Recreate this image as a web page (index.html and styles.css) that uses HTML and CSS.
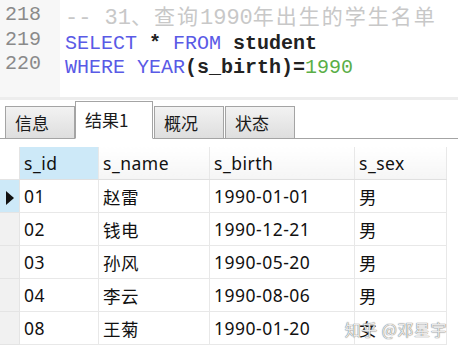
FILE: index.html
```html
<!DOCTYPE html>
<html>
    <head>
        <title>Query result</title>
        <link rel="stylesheet" href="styles.css">
    </head>
    <body>
        <div class="editor">
            <div class="gutter">
                <div>218</div>
                <div>219</div>
                <div>220</div>
            </div>
            <div class="code">
                <div class="comment">-- 31<span class="cjk">、查询</span>1990<span class="cjk">年出生的学生名单</span></div>
                <div><span class="kw">SELECT</span> <b>*</b> <span class="kw">FROM</span> <b>student</b></div>
                <div><span class="kw">WHERE</span> <span class="kw">YEAR</span><b>(s_birth)=</b><span class="num">1990</span></div>
            </div>
        </div>
        <div class="sep"></div>
        <div class="tabs">
            <div class="tab">信息</div>
            <div class="tab active">结果1</div>
            <div class="tab">概况</div>
            <div class="tab">状态</div>
        </div>
        <div class="grid">
            <table>
                <tr class="head">
                    <td class="ind"></td>
                    <td class="sel">s_id</td>
                    <td>s_name</td>
                    <td>s_birth</td>
                    <td>s_sex</td>
                </tr>
                <tr>
                    <td class="ind cur"><span class="arrow"></span></td>
                    <td>01</td><td>赵雷</td><td>1990-01-01</td><td>男</td>
                </tr>
                <tr>
                    <td class="ind"></td>
                    <td>02</td><td>钱电</td><td>1990-12-21</td><td>男</td>
                </tr>
                <tr>
                    <td class="ind"></td>
                    <td>03</td><td>孙风</td><td>1990-05-20</td><td>男</td>
                </tr>
                <tr>
                    <td class="ind"></td>
                    <td>04</td><td>李云</td><td>1990-08-06</td><td>男</td>
                </tr>
                <tr>
                    <td class="ind"></td>
                    <td>08</td><td>王菊</td><td>1990-01-20</td><td>女</td>
                </tr>
            </table>
            <div class="mark">知乎 @邓星宇</div>
        </div>
    </body>
</html>
```
FILE: styles.css
```css
body{
    margin: 0;
    width: 458px;
    height: 352px;
    overflow: hidden;
    background: #fff;
    font-family: "Noto Sans CJK SC", sans-serif;
}

.editor{
    display: flex;
    height: 97px;
    font-family: "Liberation Mono", monospace;
    font-size: 20px;
    line-height: 24.5px;
}

.gutter{
    width: 55px;
    padding: 3px 0 0 5px;
    background: #f7f7f7;
    color: #8a8a8a;
}

.code{
    flex: 1;
    padding: 3px 0 0 5px;
    white-space: nowrap;
}

.comment{
    color: #c8c8c8;
    font-size: 22px;
}

.cjk{
    font-family: "Noto Sans CJK SC", sans-serif;
    font-size: 21px;
    letter-spacing: 2px;
}

.kw{
    color: #5a5ae6;
}

.code b{
    color: #222;
}

.num{
    color: #5aae46;
}

.sep{
    height: 3px;
    background: #ededed;
}

.tabs{
    display: flex;
    align-items: flex-end;
    height: 38px;
    padding-left: 5px;
    border-bottom: 1px solid #a4a4a4;
}

.tab{
    height: 31px;
    line-height: 31px;
    padding: 0 0 0 9px;
    width: 59px;
    margin-bottom: -1px;
    border: 1px solid #a4a4a4;
    background: linear-gradient(#f2f2f2, #dedede);
    font-size: 17px;
    color: #1a1a1a;
}

.tab + .tab{
    margin-left: 1px;
}

.tab.active{
    height: 36px;
    line-height: 36px;
    width: 67px;
    margin-left: 0;
    background: #fff;
    border-bottom-color: #fff;
}

.grid{
    position: relative;
    padding-top: 8px;
}

table{
    border-collapse: collapse;
    width: 447px;
    font-family: "Noto Sans", "Noto Sans CJK SC", sans-serif;
    font-size: 17.5px;
    letter-spacing: 0.5px;
    color: #111;
    table-layout: fixed;
}

td{
    height: 32px;
    padding: 0 0 0 4px;
    border: 1px solid #e8e8e8;
    border-top: none;
    white-space: nowrap;
}

td:nth-child(2){ width: 74px; }
td:nth-child(3){ width: 106px; }
td:nth-child(4){ width: 140px; }

.head td{
    background: linear-gradient(#fff, #f5f5f5);
    border-bottom: 1px solid #e0e0e0;
}

.head td.sel{
    background: #cde9f8;
}

td.ind{
    width: 19px;
    padding: 0;
    background: #f1f1f1;
    border-left: none;
    border-color: #e4e4e4;
}

.head td.ind{
    background: #fff;
}

td.ind.cur{
    background: #cde9f8;
    text-align: center;
}

.arrow{
    display: inline-block;
    width: 0;
    height: 0;
    border-top: 7px solid transparent;
    border-bottom: 7px solid transparent;
    border-left: 8px solid #111;
    vertical-align: middle;
}

.mark{
    position: absolute;
    right: 11px;
    bottom: 4px;
    font-size: 16px;
    letter-spacing: 0.5px;
    color: rgba(255, 255, 255, 0.85);
    text-shadow: 0 0 1px #666, 0 0 1px #999;
}
```
